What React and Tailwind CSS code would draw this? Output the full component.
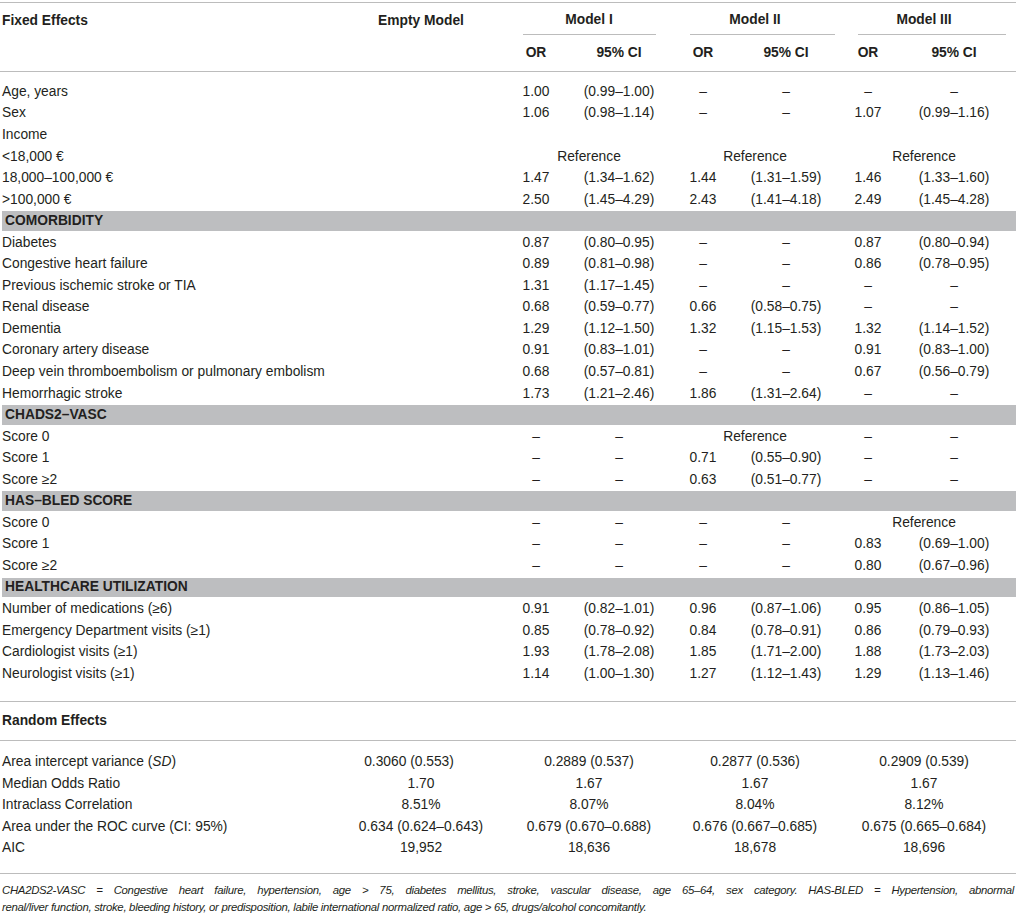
const REF = 'REF'

const rows = [
  { label: 'Age, years', v: ['1.00', '(0.99–1.00)', '–', '–', '–', '–'] },
  { label: 'Sex', v: ['1.06', '(0.98–1.14)', '–', '–', '1.07', '(0.99–1.16)'] },
  { label: 'Income', v: ['', '', '', '', '', ''] },
  { label: '<18,000 €', v: [REF, '', REF, '', REF, ''] },
  { label: '18,000–100,000 €', v: ['1.47', '(1.34–1.62)', '1.44', '(1.31–1.59)', '1.46', '(1.33–1.60)'] },
  { label: '>100,000 €', v: ['2.50', '(1.45–4.29)', '2.43', '(1.41–4.18)', '2.49', '(1.45–4.28)'] },
  { bar: 'COMORBIDITY' },
  { label: 'Diabetes', v: ['0.87', '(0.80–0.95)', '–', '–', '0.87', '(0.80–0.94)'] },
  { label: 'Congestive heart failure', v: ['0.89', '(0.81–0.98)', '–', '–', '0.86', '(0.78–0.95)'] },
  { label: 'Previous ischemic stroke or TIA', v: ['1.31', '(1.17–1.45)', '–', '–', '–', '–'] },
  { label: 'Renal disease', v: ['0.68', '(0.59–0.77)', '0.66', '(0.58–0.75)', '–', '–'] },
  { label: 'Dementia', v: ['1.29', '(1.12–1.50)', '1.32', '(1.15–1.53)', '1.32', '(1.14–1.52)'] },
  { label: 'Coronary artery disease', v: ['0.91', '(0.83–1.01)', '–', '–', '0.91', '(0.83–1.00)'] },
  { label: 'Deep vein thromboembolism or pulmonary embolism', v: ['0.68', '(0.57–0.81)', '–', '–', '0.67', '(0.56–0.79)'] },
  { label: 'Hemorrhagic stroke', v: ['1.73', '(1.21–2.46)', '1.86', '(1.31–2.64)', '–', '–'] },
  { bar: 'CHADS2–VASC' },
  { label: 'Score 0', v: ['–', '–', REF, '', '–', '–'] },
  { label: 'Score 1', v: ['–', '–', '0.71', '(0.55–0.90)', '–', '–'] },
  { label: 'Score ≥2', v: ['–', '–', '0.63', '(0.51–0.77)', '–', '–'] },
  { bar: 'HAS–BLED SCORE' },
  { label: 'Score 0', v: ['–', '–', '–', '–', REF, ''] },
  { label: 'Score 1', v: ['–', '–', '–', '–', '0.83', '(0.69–1.00)'] },
  { label: 'Score ≥2', v: ['–', '–', '–', '–', '0.80', '(0.67–0.96)'] },
  { bar: 'HEALTHCARE UTILIZATION' },
  { label: 'Number of medications (≥6)', v: ['0.91', '(0.82–1.01)', '0.96', '(0.87–1.06)', '0.95', '(0.86–1.05)'] },
  { label: 'Emergency Department visits (≥1)', v: ['0.85', '(0.78–0.92)', '0.84', '(0.78–0.91)', '0.86', '(0.79–0.93)'] },
  { label: 'Cardiologist visits (≥1)', v: ['1.93', '(1.78–2.08)', '1.85', '(1.71–2.00)', '1.88', '(1.73–2.03)'] },
  { label: 'Neurologist visits (≥1)', v: ['1.14', '(1.00–1.30)', '1.27', '(1.12–1.43)', '1.29', '(1.13–1.46)'] },
]

const random = [
  { label: <>Area intercept variance (<i>SD</i>)</>, v: ['0.3060 (0.553)', '0.2889 (0.537)', '0.2877 (0.536)', '0.2909 (0.539)'] },
  { label: 'Median Odds Ratio', v: ['1.70', '1.67', '1.67', '1.67'] },
  { label: 'Intraclass Correlation', v: ['8.51%', '8.07%', '8.04%', '8.12%'] },
  { label: 'Area under the ROC curve (CI: 95%)', v: ['0.634 (0.624–0.643)', '0.679 (0.670–0.688)', '0.676 (0.667–0.685)', '0.675 (0.665–0.684)'] },
  { label: 'AIC', v: ['19,952', '18,636', '18,678', '18,696'] },
]

// widths: [or, ci, group]
const groups = [
  ['w-[60px]', 'w-[106px]', 'w-[166px]'],
  ['w-[62px]', 'w-[104px]', 'w-[166px]'],
  ['w-[60px]', 'w-[112px]', 'w-[172px]'],
]

function Pair({ g, or, ci }) {
  if (or === REF) {
    return <div className={`${groups[g][2]} text-center`}>Reference</div>
  }
  return (
    <>
      <div className={`${groups[g][0]} text-center`}>{or}</div>
      <div className={`${groups[g][1]} text-center`}>{ci}</div>
    </>
  )
}

function BodyRow({ row }) {
  if (row.bar) {
    return (
      <div className="h-[21.56px] py-[1px] pl-[2px]">
        <div className="flex h-full items-center bg-[#bdbec0] pl-[3px] font-bold">{row.bar}</div>
      </div>
    )
  }
  return (
    <div className="flex h-[21.56px] items-center">
      <div className="w-[336px] pl-[2px]">{row.label}</div>
      <div className="w-[170px]" />
      <Pair g={0} or={row.v[0]} ci={row.v[1]} />
      <Pair g={1} or={row.v[2]} ci={row.v[3]} />
      <Pair g={2} or={row.v[4]} ci={row.v[5]} />
    </div>
  )
}

export default function App() {
  return (
    <div className="w-[1016px] bg-white pt-[2px] font-['Liberation_Sans',Arial,sans-serif] text-[13.8px] leading-none text-[#231f20]">
      <div className="border-t border-[#bcbcbc]">
        {/* header row 1 */}
        <div className="flex h-[32px] pt-[3px] font-bold">
          <div className="flex w-[336px] items-center pl-[2px]">Fixed Effects</div>
          <div className="flex w-[170px] items-center justify-center">Empty Model</div>
          <div className="flex w-[166px] flex-col">
            <div className="flex flex-1 items-center justify-center">Model I</div>
            <div className="ml-[17px] mr-[16px] border-b border-[#bcbcbc]" />
          </div>
          <div className="flex w-[166px] flex-col">
            <div className="flex flex-1 items-center justify-center">Model II</div>
            <div className="ml-[18px] mr-[3px] border-b border-[#bcbcbc]" />
          </div>
          <div className="flex w-[172px] flex-col">
            <div className="flex flex-1 items-center justify-center">Model III</div>
            <div className="ml-[20px] mr-[4px] border-b border-[#bcbcbc]" />
          </div>
        </div>

        {/* header row 2 */}
        <div className="flex h-[37px] items-center border-b border-[#bcbcbc] font-bold">
          <div className="w-[506px]" />
          {groups.map((g, i) => (
            <div key={i} className="flex">
              <div className={`${g[0]} text-center`}>OR</div>
              <div className={`${g[1]} text-center`}>95% CI</div>
            </div>
          ))}
        </div>

        {/* fixed effects body */}
        <div className="border-b border-[#bcbcbc] pb-[17px] pt-[9px]">
          {rows.map((r, i) => (
            <BodyRow key={i} row={r} />
          ))}
        </div>

        {/* random effects header */}
        <div className="flex h-[39px] items-center border-b border-[#bcbcbc] pl-[2px] font-bold">Random Effects</div>

        <div className="border-b border-[#bcbcbc] pb-[14px] pt-[10px]">
          {random.map((r, i) => (
            <div key={i} className="flex h-[21.56px] items-center">
              <div className="w-[336px] pl-[2px]">{r.label}</div>
              <div className={`w-[170px] text-center ${i === 0 ? 'pr-[24px]' : ''}`}>{r.v[0]}</div>
              <div className="w-[166px] text-center">{r.v[1]}</div>
              <div className="w-[166px] text-center">{r.v[2]}</div>
              <div className="w-[172px] text-center">{r.v[3]}</div>
            </div>
          ))}
        </div>

        {/* footnote */}
        <div className="px-[2px] pt-[8px] text-[11.4px] italic leading-[17px] tracking-[-0.3px]">
          <div className="text-justify [text-align-last:justify]">
            CHA2DS2-VASC = Congestive heart failure, hypertension, age &gt; 75, diabetes mellitus, stroke, vascular disease, age 65–64, sex category. HAS-BLED = Hypertension, abnormal
          </div>
          <div>
            renal/liver function, stroke, bleeding history, or predisposition, labile international normalized ratio, age &gt; 65, drugs/alcohol concomitantly.
          </div>
        </div>
      </div>
    </div>
  )
}
